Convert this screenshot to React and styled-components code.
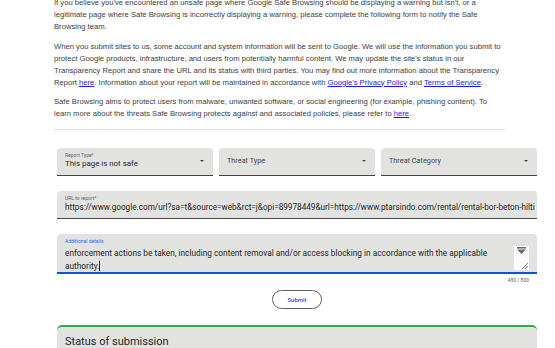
import React from 'react'
import styled, { createGlobalStyle } from 'styled-components'

const GlobalStyle = createGlobalStyle`
	html, body {
		margin: 0;
		padding: 0;
		background: #fff;
		overflow: hidden;
	}
`

const Page = styled.div`
	width: 555px;
	height: 348px;
	overflow: hidden;
	padding-left: 54px;
	box-sizing: border-box;
	font-family: Arial, "Liberation Sans", sans-serif;
`

const Intro = styled.div`
	width: 451px;
	margin-top: -3px;
	font-size: 7.65px;
	line-height: 12px;
	color: #3c4043;
`

const Para = styled.p`
	margin: 0 0 7.5px 0;
`

const Link = styled.a`
	color: #1a1aee;
	text-decoration: underline;
`

const Divider = styled.hr`
	width: 451px;
	margin: 9px 0 0 0;
	border: 0;
	border-top: 1px solid #dadce0;
`

const Form = styled.div`
	width: 480px;
	margin: 18px 0 0 3px;
	font-family: Roboto, "Liberation Sans", sans-serif;
`

const SelectRow = styled.div`
	display: flex;
	gap: 6px;
`

const Field = styled.div`
	position: relative;
	flex: 1;
	box-sizing: border-box;
	height: ${p => p.$height || 28}px;
	background: #e2e3e1;
	border-radius: 4px 4px 0 0;
	border-bottom: ${p => p.$focused ? '2px solid #0b57d0' : '1px solid #444746'};
	padding: ${p => p.$padTop ?? 4}px 0 0 8px;
	display: flex;
	flex-direction: column;
	justify-content: ${p => p.$center ? 'center' : 'flex-start'};
	overflow: hidden;
	margin-top: ${p => p.$mt || 0}px;
`

const FieldLabel = styled.div`
	font-size: 5px;
	line-height: 6px;
	color: ${p => p.$active ? '#1a73e8' : '#5f6368'};
`

const FieldValue = styled.div`
	font-size: ${p => p.$size || 7.9}px;
	line-height: 12px;
	color: #1f1f1f;
	white-space: nowrap;
`

const Placeholder = styled.div`
	font-size: 7.3px;
	color: #444746;
	margin-top: -3px;
`

const Arrow = styled.div`
	position: absolute;
	right: 9px;
	top: 12px;
	width: 0;
	height: 0;
	border-left: 2.5px solid transparent;
	border-right: 2.5px solid transparent;
	border-top: 2.5px solid #444746;
`

const AreaText = styled.div`
	font-size: 8.3px;
	line-height: 12.5px;
	margin-top: 3px;
	color: #1f1f1f;
	width: 440px;
`

const Caret = styled.span`
	display: inline-block;
	width: 1px;
	height: 10px;
	background: #1f1f1f;
	vertical-align: -2px;
`

const ScrollWidget = styled.div`
	position: absolute;
	right: 8px;
	top: 12px;
	display: flex;
	flex-direction: column;
	width: 15px;
`

const ScrollBtn = styled.div`
	height: 9px;
	background: #f8f8f8;
	display: flex;
	align-items: center;
	justify-content: center;
`

const Grip = styled.div`
	height: 15px;
	background: #fff;
	display: flex;
	align-items: flex-end;
	justify-content: flex-end;
`

const Counter = styled.div`
	text-align: right;
	padding-right: 8px;
	font-size: 5px;
	line-height: 8px;
	color: #5f6368;
	margin-top: 2px;
`

const SubmitWrap = styled.div`
	display: flex;
	justify-content: center;
	margin-top: 6px;
`

const SubmitButton = styled.button`
	width: 50px;
	height: 19px;
	border: 1px solid #5f6368;
	border-radius: 10px;
	background: #fff;
	color: #3b4fd8;
	font-family: Roboto, "Liberation Sans", sans-serif;
	font-size: 6px;
	font-weight: 500;
	padding: 0;
`

const StatusCard = styled.div`
	margin-top: 16px;
	height: 40px;
	background: #e2e3e1;
	border-top: 2px solid #34a853;
	border-radius: 5px 5px 0 0;
	padding: 8px 0 0 8px;
	box-sizing: border-box;
`

const StatusTitle = styled.div`
	font-size: 11px;
	line-height: 14px;
	color: #1f1f1f;
`

const App = () => {
	return (
		<Page>
			<GlobalStyle />
			<Intro>
				<Para>
					If you believe you've encountered an unsafe page where Google Safe Browsing should be displaying a warning but isn't, or a legitimate page where Safe Browsing is incorrectly displaying a warning, please complete the following form to notify the Safe Browsing team.
				</Para>
				<Para>
					When you submit sites to us, some account and system information will be sent to Google. We will use the information you submit to protect Google products, infrastructure, and users from potentially harmful content. We may update the site's status in our Transparency Report and share the URL and its status with third parties. You may find out more information about the Transparency Report <Link>here</Link>. Information about your report will be maintained in accordance with <Link>Google's Privacy Policy</Link> and <Link>Terms of Service</Link>.
				</Para>
				<Para>
					Safe Browsing aims to protect users from malware, unwanted software, or social engineering (for example, phishing content). To learn more about the threats Safe Browsing protects against and associated policies, please refer to <Link>here</Link>.
				</Para>
			</Intro>
			<Divider />
			<Form>
				<SelectRow>
					<Field>
						<FieldLabel>Report Type*</FieldLabel>
						<FieldValue>This page is not safe</FieldValue>
						<Arrow />
					</Field>
					<Field $center $padTop={0}>
						<Placeholder>Threat Type</Placeholder>
						<Arrow />
					</Field>
					<Field $center $padTop={0}>
						<Placeholder>Threat Category</Placeholder>
						<Arrow />
					</Field>
				</SelectRow>
				<Field $mt={15}>
					<FieldLabel>URL to report*</FieldLabel>
					<FieldValue $size={8.2}>https://www.google.com/url?sa=t&amp;source=web&amp;rct=j&amp;opi=89978449&amp;url=https://www.ptarsindo.com/rental/rental-bor-beton-hilti</FieldValue>
				</Field>
				<Field $mt={15} $height={40} $focused>
					<FieldLabel $active>Additional details</FieldLabel>
					<AreaText>
						enforcement actions be taken, including content removal and/or access blocking in accordance with the applicable authority.<Caret />
					</AreaText>
					<ScrollWidget>
						<ScrollBtn>
							<svg width="9" height="7" viewBox="0 0 9 7">
								<rect x="0" y="0" width="9" height="1.5" fill="#6b6b6b" />
								<path d="M0 2.5 L9 2.5 L4.5 7 Z" fill="#6b6b6b" />
							</svg>
						</ScrollBtn>
						<Grip>
							<svg width="10" height="10" viewBox="0 0 10 10">
								<path d="M9 3 L3 9 M9 6 L6 9" stroke="#555" strokeWidth="0.8" />
							</svg>
						</Grip>
					</ScrollWidget>
				</Field>
				<Counter>480 / 800</Counter>
				<SubmitWrap>
					<SubmitButton>Submit</SubmitButton>
				</SubmitWrap>
				<StatusCard>
					<StatusTitle>Status of submission</StatusTitle>
				</StatusCard>
			</Form>
		</Page>
	)
}

export default App
